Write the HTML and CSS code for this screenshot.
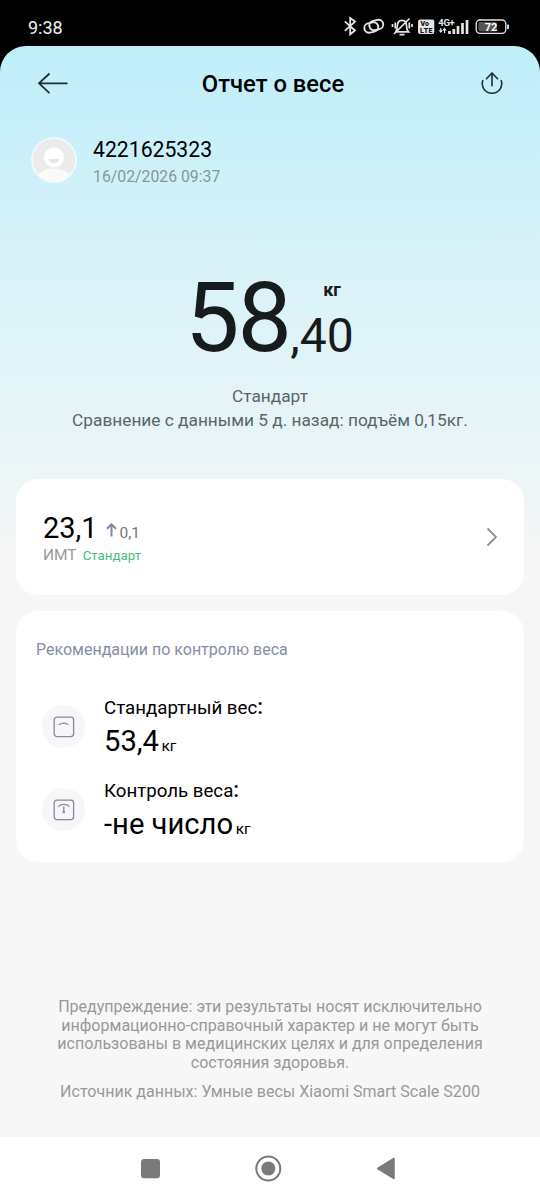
FILE: index.html
```html
<!DOCTYPE html>
<html lang="ru">
<head>
<meta charset="utf-8">
<title>Отчет о весе</title>
<link rel="stylesheet" href="styles.css">
</head>
<body>
<div class="status">
  <span class="clock">9:38</span>
  <svg class="status-icons" width="170" height="24" viewBox="340 15 170 24" fill="none" stroke="#e6e6e6" stroke-width="1.6">
    <path d="M344.800 21.300L355 30.500l-4.800 3.800V18l4.800 3.600-10.200 9.200" stroke-width="1.800"/>
    <g stroke-width="1.900"><rect x="364.300" y="22.800" width="14" height="9.400" rx="4.700" transform="rotate(-12 371.300 27.500)"/><rect x="369.300" y="20.300" width="14" height="9.400" rx="4.700" transform="rotate(-12 376.300 25)"/></g>
    <path d="M395.500 31.800h13c-1.500-1.500-1.900-3-1.900-5.500 0-3.700-1.700-6-4.600-6s-4.700 2.300-4.700 6c0 2.500-.300 4-1.800 5.500M399.500 34.700h5M394 34L409.500 18.500M395.300 22.500v6M392.500 24v3M409.300 22.500v6M412 24v3" stroke-width="1.700"/>
    <rect x="418" y="19.500" width="16.300" height="14.500" rx="2" fill="#e6e6e6" stroke="none"/>
    <g fill="#111" stroke="none" class="volte"><text x="420.500" y="26.300">Vo</text><text x="420" y="32.800" textLength="12.500">LTE</text></g>
    <text x="438.300" y="25.500" class="network" fill="#e6e6e6" stroke="none" textLength="16.500">4G+</text>
    <path d="M440.800 28v4M444.500 29v4" stroke-width="1.200"/>
    <path d="M438.600 30.200h4.400L440.800 33zM442.300 30.500h4.400L444.500 27.500z" fill="#e6e6e6" stroke="none"/>
    <path d="M449.500 34v-3M453.800 34v-5M458 34v-8M462.500 34v-11M467 34V20" stroke-width="2.700"/>
    <rect x="476.200" y="20" width="29.600" height="13.400" rx="3.800" stroke-width="1.300"/>
    <rect x="478.400" y="22" width="18.600" height="9.400" rx="2" fill="#555" stroke="none"/>
    <path d="M508 24.500v4.500" stroke-width="1.800"/>
    <text x="484.800" y="31" class="battery" fill="#fff" stroke="none" textLength="12.500">72</text>
  </svg>
</div>
<main class="screen">
  <header class="bar">
    <svg width="32" height="24" viewBox="0 0 32 24" fill="none" stroke="#1c3036" stroke-width="1.800"><path d="M30.500 11.300H2M12.500 1.500L2 11.300l10.500 9.800"/></svg>
    <h1 class="title">Отчет о весе</h1>
    <svg width="24" height="24" viewBox="0 0 24 24" fill="none" stroke="#1c3036" stroke-width="1.600"><path d="M12 14.300V1.500M6 7.200L12 1l6 6.200M3 8.100C.6 14 4.500 21.300 12 21.300S23.400 14 21 8.100"/></svg>
  </header>
  <section class="user">
    <svg width="46" height="46" viewBox="0 0 46 46">
      <defs><clipPath id="face"><circle cx="23" cy="23" r="21.500"/></clipPath></defs>
      <circle cx="23" cy="23" r="22" fill="#ebebeb" stroke="#f9fbfb" stroke-width="1.500"/>
      <circle cx="23" cy="20.500" r="10" fill="#fff"/>
      <path d="M17.800 22h10.400a5.200 4.300 0 0 1-10.400 0z" fill="#e6e6e6"/>
      <ellipse cx="23" cy="44" rx="18" ry="12.500" fill="#fafafa" clip-path="url(#face)"/>
    </svg>
    <div><div class="name">4221625323</div><div class="date">16/02/2026 09:37</div></div>
  </section>
  <section class="weight">
    <span class="whole">58</span>
    <span class="fraction"><span class="unit">кг</span><span class="decimals">,40</span></span>
  </section>
  <section class="summary"><div class="level"><span>Стандарт</span></div><div class="compare">Сравнение с данными 5 д. назад: подъём 0,15кг.</div></section>
  <section class="card bmi">
    <div>
      <div class="bmi-row"><span class="bmi-value">23,1</span><svg width="11" height="15" viewBox="0 0 11 15" fill="none" stroke="#7f88a8" stroke-width="2"><path d="M5.500 13.500V1.500M1 5.800L5.500 1.300 10 5.800"/></svg><span class="delta">0,1</span></div>
      <div class="bmi-label"><span class="bmi-name">ИМТ</span><span class="good">Стандарт</span></div>
    </div>
    <svg width="12" height="20" viewBox="0 0 12 20" fill="none" stroke="#909090" stroke-width="1.800"><path d="M1.500 1.500L10 10l-8.500 8.500"/></svg>
  </section>
  <section class="card advice">
    <h2 class="advice-title">Рекомендации по контролю веса</h2>
    <div class="item">
      <span class="badge"><svg width="22" height="22" viewBox="0 0 22 22" fill="none" stroke="#858aa3" stroke-width="1.300"><rect x="1.200" y="1.200" width="19.400" height="19.400" rx="2.800"/><path d="M6 8.800Q10.700 5.600 15.400 8.800"/></svg></span>
      <div><div class="label">Стандартный вес<span class="colon">:</span></div><div class="value"><span class="num">53,4</span><small class="kg">кг</small></div></div>
    </div>
    <div class="item">
      <span class="badge"><svg width="22" height="22" viewBox="0 0 22 22" fill="none" stroke="#858aa3" stroke-width="1.300"><rect x="1.200" y="1.200" width="19.400" height="19.400" rx="2.800"/><path d="M5 7.500Q10.800 3.200 16.600 7.500M10.800 7.500v6"/><circle cx="10.800" cy="13" r="1.300" fill="#858aa3" stroke="none"/></svg></span>
      <div><div class="label">Контроль веса<span class="colon">:</span></div><div class="value"><span class="num">-не число</span><small class="kg">кг</small></div></div>
    </div>
  </section>
  <footer class="notes">
    <p class="warning">Предупреждение: эти результаты носят исключительно<br>информационно-справочный характер и не могут быть<br>использованы в медицинских целях и для определения<br>состояния здоровья.</p>
    <p class="source">Источник данных: Умные весы Xiaomi Smart Scale S200</p>
  </footer>
</main>
<nav class="nav">
  <svg width="540" height="63" viewBox="0 1137 540 63" fill="#7a7a7a"><rect x="141" y="1159" width="19" height="19.200" rx="3"/><circle cx="268.300" cy="1168.500" r="7"/><circle cx="268.300" cy="1168.500" r="12" fill="none" stroke="#7a7a7a" stroke-width="2"/><path d="M377.700 1168.500L394 1158.500V1178.500z" stroke="#7a7a7a" stroke-width="1.500" stroke-linejoin="round"/></svg>
</nav>
</body>
</html>
```
FILE: styles.css
```css
* { box-sizing: border-box; }
body { margin: 0; width: 540px; height: 1200px; overflow: hidden; background: #000; font-family: Roboto, "Noto Sans", sans-serif; color: #000; white-space: nowrap; }
svg { display: block; flex: none; }
h1, h2, p { margin: 0; font-weight: 400; }
.status { height: 46px; padding: 15px 30px 0 28px; display: flex; justify-content: space-between; }
.clock { color: #f2f2f2; font-size: 18px; font-weight: 400; line-height: 25px; }
.volte { font-size: 7px; font-weight: 900; }
.network { font-size: 9.5px; font-weight: 700; }
.battery { font-size: 11px; font-weight: 700; }
.screen { height: 1091px; border-radius: 26px 26px 0 0; background: linear-gradient(#beeefa 0, #d7f2f8 205px, #e2f4f7 335px, #ebf5f7 415px, #f7f7f7 510px); }
.bar { height: 76px; padding: 0 36px 0 37px; display: flex; align-items: center; justify-content: space-between; }
.title { font-size: 23.8px; font-weight: 500; line-height: 30px; padding-right: 3px; }
.user { height: 90px; padding: 15px 0 0 31px; display: flex; gap: 16px; }
.user > svg { margin: 0 -0.4px 0 0.4px; }
.user > div { margin-top: -1px; }
.name { font-size: 21.2px; line-height: 28px; }
.date { font-size: 15.8px; line-height: 25px; color: #82979d; }
.weight { height: 170px; padding: 53px 0 0 185px; display: flex; color: #171b1b; }
.whole { font-size: 97px; line-height: 107px; letter-spacing: -1.9px; }
.fraction { display: flex; flex-direction: column; }
.unit { font-size: 18px; font-weight: 700; line-height: 24px; padding: 13px 0 0 33px; }
.decimals { font-size: 48px; line-height: 54px; padding-top: 7px; }
.summary { height: 97px; padding-top: 2px; text-align: center; color: #596568; font-size: 17.27px; line-height: 24px; }
.card { margin: 0 16px; border-radius: 22px; background: #fff; }
.bmi { height: 116px; padding: 0 26px 0 27px; display: flex; align-items: center; justify-content: space-between; }
.bmi-row { display: flex; align-items: baseline; line-height: 34px; padding-top: 4px; }
.bmi-value { font-size: 29px; }
.bmi-row svg { margin: 0 3px 0 8px; }
.delta { font-size: 15.5px; color: #777; }
.bmi-label { display: flex; align-items: baseline; line-height: 20px; margin-top: -5px; padding-bottom: 2px; }
.bmi-name { font-size: 15.5px; color: #999; }
.good { font-size: 13.3px; color: #45bd78; margin-left: 6px; }
.advice { height: 251px; margin-top: 16px; padding: 27px 20px 0; }
.advice-title { font-size: 16px; line-height: 23px; color: #868da9; margin-bottom: 32px; }
.item { height: 83px; padding-left: 6px; display: flex; gap: 19px; }
.badge { width: 43px; height: 43px; margin-top: 12px; border-radius: 50%; background: #f7f7fa; display: flex; align-items: center; justify-content: center; }
.label { font-size: 18.7px; line-height: 30px; height: 30px; }
.colon { font-size: 22px; font-weight: 500; line-height: 1; }
.value { line-height: 36px; }
.num { font-size: 29.2px; }
.kg { font-size: 15.5px; margin-left: 2.5px; }
.notes { padding-top: 136px; text-align: center; color: #999; font-size: 16.05px; }
.warning { line-height: 18.7px; }
.source { margin-top: 9px; line-height: 20px; }
.nav { height: 63px; background: #fff; }
```
